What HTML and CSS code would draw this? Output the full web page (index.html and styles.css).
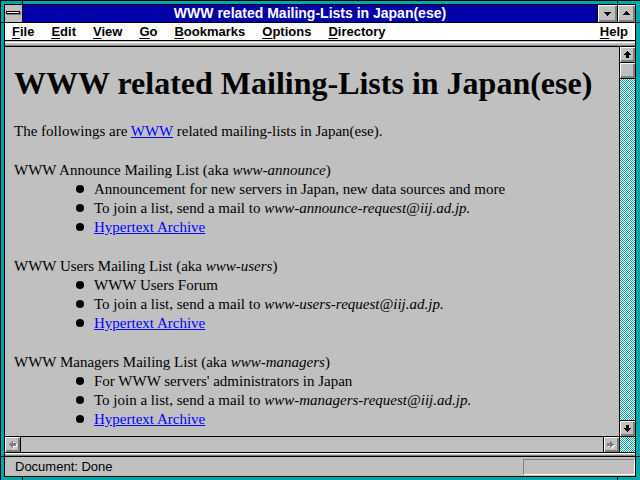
FILE: index.html
```html
<!DOCTYPE html>
<html>
<head>
    <title>WWW related Mailing-Lists in Japan(ese)</title>
    <link rel="stylesheet" href="styles.css">
</head>
<body>
<div class="frame">
<div class="win">
    <div class="titlebar">
        <div class="sysmenu"><span class="dash"></span></div>
        <div class="title">WWW related Mailing-Lists in Japan(ese)</div>
        <div class="tbtn min">
            <svg width="19" height="17" viewBox="0 0 19 17" shape-rendering="crispEdges">
                <rect x="6" y="7" width="7" height="1"/><rect x="7" y="8" width="5" height="1"/>
                <rect x="8" y="9" width="3" height="1"/><rect x="9" y="10" width="1" height="1"/>
            </svg>
        </div>
        <div class="tbtn max">
            <svg width="17" height="17" viewBox="0 0 17 17" shape-rendering="crispEdges">
                <rect x="8" y="6" width="1" height="1"/><rect x="7" y="7" width="3" height="1"/>
                <rect x="6" y="8" width="5" height="1"/><rect x="5" y="9" width="7" height="1"/>
            </svg>
        </div>
    </div>

    <div class="menubar">
        <span><u>F</u>ile</span>
        <span><u>E</u>dit</span>
        <span><u>V</u>iew</span>
        <span><u>G</u>o</span>
        <span><u>B</u>ookmarks</span>
        <span><u>O</u>ptions</span>
        <span><u>D</u>irectory</span>
        <span class="help"><u>H</u>elp</span>
    </div>
    <div class="divider"></div>

    <div class="main">
        <div class="content">
            <h1>WWW related Mailing-Lists in Japan(ese)</h1>
            <p>The followings are <a href="#">WWW</a> related mailing-lists in Japan(ese).</p>

            <div class="group">
                <div class="head">WWW Announce Mailing List (aka <i>www-announce</i>)</div>
                <ul>
                    <li>Announcement for new servers in Japan, new data sources and more</li>
                    <li>To join a list, send a mail to <i>www-announce-request@iij.ad.jp.</i></li>
                    <li><a href="#">Hypertext Archive</a></li>
                </ul>
            </div>

            <div class="group">
                <div class="head">WWW Users Mailing List (aka <i>www-users</i>)</div>
                <ul>
                    <li>WWW Users Forum</li>
                    <li>To join a list, send a mail to <i>www-users-request@iij.ad.jp.</i></li>
                    <li><a href="#">Hypertext Archive</a></li>
                </ul>
            </div>

            <div class="group">
                <div class="head">WWW Managers Mailing List (aka <i>www-managers</i>)</div>
                <ul>
                    <li>For WWW servers' administrators in Japan</li>
                    <li>To join a list, send a mail to <i>www-managers-request@iij.ad.jp.</i></li>
                    <li><a href="#">Hypertext Archive</a></li>
                </ul>
            </div>
        </div>

        <div class="vscroll">
            <div class="sbtn up">
                <svg width="15" height="15" viewBox="0 0 15 15" shape-rendering="crispEdges">
                    <rect x="7" y="4" width="1" height="1"/><rect x="6" y="5" width="3" height="1"/>
                    <rect x="5" y="6" width="5" height="1"/><rect x="4" y="7" width="7" height="1"/>
                    <rect x="6" y="8" width="3" height="3"/>
                </svg>
            </div>
            <div class="sbtn thumb"></div>
            <div class="track"></div>
            <div class="sbtn down">
                <svg width="15" height="15" viewBox="0 0 15 15" shape-rendering="crispEdges">
                    <rect x="6" y="4" width="3" height="3"/><rect x="4" y="7" width="7" height="1"/>
                    <rect x="5" y="8" width="5" height="1"/><rect x="6" y="9" width="3" height="1"/>
                    <rect x="7" y="10" width="1" height="1"/>
                </svg>
            </div>
        </div>
    </div>

    <div class="hscroll">
        <div class="sbtn left">
            <svg width="15" height="15" viewBox="0 0 15 15" shape-rendering="crispEdges">
                <g fill="#fff" transform="translate(1,1)">
                    <rect x="4" y="7" width="1" height="1"/><rect x="5" y="6" width="1" height="3"/>
                    <rect x="6" y="5" width="1" height="5"/><rect x="7" y="4" width="1" height="7"/>
                    <rect x="8" y="6" width="3" height="3"/>
                </g>
                <g fill="#808080">
                    <rect x="4" y="7" width="1" height="1"/><rect x="5" y="6" width="1" height="3"/>
                    <rect x="6" y="5" width="1" height="5"/><rect x="7" y="4" width="1" height="7"/>
                    <rect x="8" y="6" width="3" height="3"/>
                </g>
            </svg>
        </div>
        <div class="htrack"></div>
        <div class="sbtn right">
            <svg width="15" height="15" viewBox="0 0 15 15" shape-rendering="crispEdges">
                <g fill="#fff" transform="translate(1,1)">
                    <rect x="3" y="6" width="3" height="3"/><rect x="6" y="4" width="1" height="7"/>
                    <rect x="7" y="5" width="1" height="5"/><rect x="8" y="6" width="1" height="3"/>
                    <rect x="9" y="7" width="1" height="1"/>
                </g>
                <g fill="#808080">
                    <rect x="3" y="6" width="3" height="3"/><rect x="6" y="4" width="1" height="7"/>
                    <rect x="7" y="5" width="1" height="5"/><rect x="8" y="6" width="1" height="3"/>
                    <rect x="9" y="7" width="1" height="1"/>
                </g>
            </svg>
        </div>
        <div class="corner"></div>
    </div>
    <div class="divider2"></div>

    <div class="status">
        <span class="msg">Document: Done</span>
        <div class="progress"></div>
    </div>
</div>
</div>
</body>
</html>
```

FILE: styles.css
```css
html, body {
    margin: 0;
    padding: 0;
}
body {
    width: 640px;
    height: 480px;
    overflow: hidden;
    font-family: "Liberation Sans", Arial, sans-serif;
    font-size: 13px;
}
.frame {
    width: 640px;
    height: 480px;
    box-sizing: border-box;
    border-top: 1px solid #000;
    border-left: 1px solid #000;
    padding: 3px 4px 3px 3px;
    background-color: #00a8a8;
    /* resize tick marks on the border */
    background-image:
        linear-gradient(#000, #000), linear-gradient(#000, #000),
        linear-gradient(#000, #000), linear-gradient(#000, #000);
    background-repeat: no-repeat;
    background-size: 1px 100%, 1px 100%, 100% 1px, 100% 1px;
    background-position: 21px 0, 616px 0, 0 21px, 0 455px;
}
.win {
    height: 100%;
    box-sizing: border-box;
    border: 1px solid #000;
    background: #c0c0c0;
    display: flex;
    flex-direction: column;
}

/* title bar */
.titlebar {
    display: flex;
    height: 17px;
    border-bottom: 1px solid #000;
    flex: none;
}
.sysmenu {
    width: 17px;
    border-right: 1px solid #000;
    background: #c0c0c0;
    position: relative;
}
.dash {
    position: absolute;
    left: 1px;
    top: 6px;
    width: 12px;
    height: 1px;
    border: 1px solid #000;
    background: #fff;
    box-shadow: 1px 1px 0 #808080;
}
.title {
    flex: 1;
    background: #0000a8;
    color: #fff;
    font-size: 14px;
    font-weight: bold;
    text-align: center;
    line-height: 17px;
}
.tbtn {
    border-left: 1px solid #000;
    background: #c0c0c0;
    box-shadow: inset 1px 1px 0 #fff, inset -1px -1px 0 #808080, inset -2px -2px 0 #808080;
}
.tbtn svg {
    display: block;
}
.min { width: 19px; }
.max { width: 17px; }

/* menu */
.menubar {
    display: flex;
    gap: 17px;
    height: 17px;
    line-height: 17px;
    padding: 0 7px;
    background: #fff;
    border-bottom: 1px solid #000;
    font-weight: bold;
    flex: none;
}
.menubar u {
    text-underline-offset: 2px;
}
.menubar .help {
    margin-left: auto;
}
.divider {
    height: 5px;
    flex: none;
    border-bottom: 1px solid #000;
    background: linear-gradient(#c0c0c0 0 1px, #fff 1px 2px, #c0c0c0 2px 4px, #808080 4px 5px);
}
.divider2 {
    height: 3px;
    flex: none;
    border-bottom: 1px solid #000;
    background: linear-gradient(#fff 0 1px, #c0c0c0 1px 2px, #808080 2px 3px);
}

/* page */
.main {
    display: flex;
    height: 389px;
    flex: none;
}
.content {
    flex: 1;
    overflow: hidden;
    padding: 18px 0 0 9px;
    font-family: "Liberation Serif", "Times New Roman", serif;
    font-size: 15px;
    line-height: 19px;
    color: #000;
    white-space: nowrap;
}
h1 {
    margin: 0 0 20px;
    font-size: 32px;
    line-height: 37px;
}
p {
    margin: 0;
}
a {
    color: #0000ff;
}
.group {
    margin-top: 20px;
}
ul {
    margin: 0;
    padding: 0 0 0 80px;
    list-style: none;
}
li::before {
    content: "";
    display: inline-block;
    width: 8px;
    height: 8px;
    border-radius: 50%;
    background: #000;
    margin: 0 10px 0 -18px;
    vertical-align: 1px;
}

/* scrollbars */
.vscroll {
    width: 15px;
    border-left: 1px solid #000;
    display: flex;
    flex-direction: column;
}
.sbtn {
    width: 15px;
    height: 15px;
    flex: none;
    background: #c0c0c0;
    box-shadow: inset 1px 1px 0 #fff, inset -1px -1px 0 #808080, inset -2px -2px 0 #808080;
}
.sbtn svg {
    display: block;
}
.up, .thumb {
    border-bottom: 1px solid #000;
}
.down {
    border-top: 1px solid #000;
}
.track, .corner {
    background: repeating-conic-gradient(#00a8a8 0 25%, #fff 0 50%) 0 0 / 2px 2px;
}
.track {
    flex: 1;
}
.hscroll {
    display: flex;
    height: 15px;
    flex: none;
    border-top: 1px solid #000;
    border-bottom: 1px solid #000;
}
.left {
    border-right: 1px solid #000;
}
.htrack {
    flex: 1;
    background: #c0c0c0;
}
.right {
    border-left: 1px solid #000;
    border-right: 1px solid #000;
}
.corner {
    width: 15px;
}

/* status bar */
.status {
    flex: 1;
    display: flex;
    align-items: flex-start;
    line-height: 19px;
    padding-left: 10px;
}
.msg {
    flex: 1;
}
.progress {
    width: 110px;
    height: 14px;
    margin-top: 2px;
    border: 1px solid;
    border-color: #808080 #fff #fff #808080;
}
```
